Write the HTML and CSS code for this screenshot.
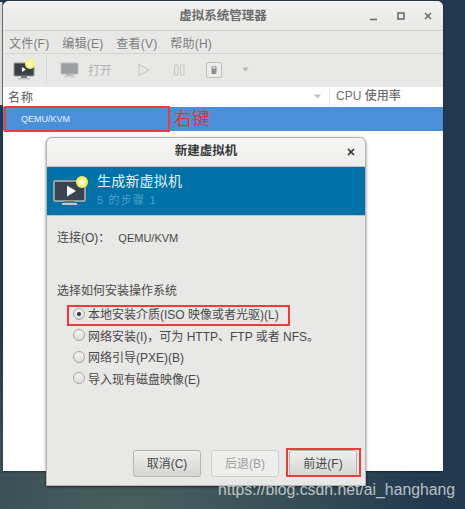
FILE: index.html
```html
<!DOCTYPE html>
<html lang="zh">
<head>
<meta charset="utf-8">
<title>虚拟系统管理器</title>
<link rel="stylesheet" href="styles.css">
</head>
<body>
<div class="backedge"></div>
<div class="window">
  <div class="titlebar">
    <span class="title">虚拟系统管理器</span>
    <div class="wm">
      <svg width="10" height="10" viewBox="0 0 10 10"><path d="M1 8.500h7" stroke="#666" stroke-width="1.400"/></svg>
      <svg width="10" height="10" viewBox="0 0 10 10"><rect x="2" y="2" width="6" height="6" fill="none" stroke="#666" stroke-width="1.500"/></svg>
      <svg width="10" height="10" viewBox="0 0 10 10"><path d="M2 2l6 6M8 2l-6 6" stroke="#666" stroke-width="1.500"/></svg>
    </div>
  </div>
  <div class="menubar">
    <span>文件(F)</span><span>编辑(E)</span><span>查看(V)</span><span>帮助(H)</span>
  </div>
  <div class="toolbar">
    <svg class="tb-new" width="24" height="22" viewBox="0 0 24 22">
      <rect x="1" y="4" width="20" height="13" rx="1" fill="#3a4048" stroke="#999"/>
      <path d="M9 13v-5l4 2.500z" fill="#fff"/>
      <rect x="8" y="17" width="6" height="2" fill="#777"/><rect x="5" y="19" width="12" height="1.500" fill="#bbb"/>
      <circle cx="17" cy="5" r="5" fill="#f6f27a"/>
      <path d="M17 1.500l1 2.400 2.500.2-1.900 1.600.6 2.500-2.200-1.300-2.200 1.300.6-2.500-1.900-1.600 2.500-.2z" fill="#fffde0"/>
    </svg>
    <div class="sep"></div>
    <svg class="tb-mon" width="20" height="18" viewBox="0 0 20 18">
      <rect x="1" y="2" width="17" height="11" rx="1" fill="#9a9ea2" stroke="#bbb"/>
      <rect x="6" y="13" width="7" height="2" fill="#bbb"/><rect x="4" y="15" width="11" height="1.500" fill="#ccc"/>
    </svg>
    <span class="tb-open">打开</span>
    <svg class="tb-play" width="12" height="14" viewBox="0 0 12 14"><path d="M1 1.500v11l10-5.500z" fill="none" stroke="#c8c8c6" stroke-width="1.100"/></svg>
    <svg class="tb-pause" width="11" height="12" viewBox="0 0 11 12"><rect x=".5" y="1" width="3.500" height="10" rx=".5" fill="none" stroke="#c4c4c2"/><rect x="6.500" y="1" width="3.500" height="10" rx=".5" fill="none" stroke="#c4c4c2"/></svg>
    <svg class="tb-stop" width="16" height="16" viewBox="0 0 16 16"><rect x=".5" y=".5" width="15" height="15" rx="2" fill="#ececea" stroke="#bdbdbb"/><rect x="5.500" y="4" width="5" height="8" rx="1" fill="#8e8e8e"/><rect x="6.500" y="4.500" width="3" height="2" fill="#ddd"/></svg>
    <svg class="tb-caret" width="8" height="5" viewBox="0 0 8 5"><path d="M0 .5h7l-3.500 4z" fill="#bdbdbb"/></svg>
  </div>
  <div class="listhead">
    <div class="col-name"><span>名称</span><svg width="8" height="5" viewBox="0 0 8 5"><path d="M0 .5h7l-3.500 4z" fill="#bbb"/></svg></div>
    <div class="col-cpu">CPU 使用率</div>
  </div>
  <div class="row">QEMU/KVM</div>
  <div class="listbody"></div>
</div>

<div class="redbox box-row"></div>
<div class="redtext">右键</div>

<div class="dialog">
  <div class="dlg-title">
    <span>新建虚拟机</span>
    <svg class="dlg-close" width="8" height="8" viewBox="0 0 8 8"><path d="M1 1l6 6M7 1l-6 6" stroke="#333" stroke-width="1.700"/></svg>
  </div>
  <div class="banner">
    <svg width="36" height="32" viewBox="0 0 36 32">
      <rect x="1" y="6" width="31" height="20" rx="1" fill="#3a4350" stroke="#b5b5b0" stroke-width="1.500"/>
      <path d="M14 10.500v11l9-5.500z" fill="#fff"/>
      <rect x="12" y="26" width="9" height="2" fill="#6f7070"/><rect x="9" y="28" width="15" height="2" fill="#c8c8c0"/>
      <circle cx="29" cy="7" r="6" fill="#f2ee55"/>
      <path d="M29 2.500l1.300 3 3.200.3-2.400 2.100.7 3.100-2.800-1.700-2.800 1.700.7-3.100-2.400-2.100 3.200-.3z" fill="#fffde5"/>
    </svg>
    <div class="banner-text">
      <div class="banner-h">生成新虚拟机</div>
      <div class="banner-s">5 的步骤 1</div>
    </div>
  </div>
  <div class="dlg-body">
    <div class="conn"><span>连接(O)：</span><span class="conn-val">QEMU/KVM</span></div>
    <div class="how">选择如何安装操作系统</div>
    <div class="options">
      <label class="opt"><span class="radio on"></span>本地安装介质(ISO 映像或者光驱)(L)</label>
      <label class="opt"><span class="radio"></span>网络安装(I)，可为 HTTP、FTP 或者 NFS。</label>
      <label class="opt"><span class="radio"></span>网络引导(PXE)(B)</label>
      <label class="opt"><span class="radio"></span>导入现有磁盘映像(E)</label>
    </div>
    <div class="buttons">
      <button class="btn">取消(C)</button>
      <button class="btn off">后退(B)</button>
      <button class="btn">前进(F)</button>
    </div>
  </div>
</div>

<div class="redbox box-opt"></div>
<div class="redbox box-btn"></div>
<div class="watermark">https://blog.csdn.net/ai_hanghang</div>
</body>
</html>
```
FILE: styles.css
```css
* { box-sizing: border-box; }
html, body { margin: 0; height: 100%; }
body {
  position: relative;
  width: 465px;
  height: 509px;
  overflow: hidden;
  font-family: "Liberation Sans", "Noto Sans CJK SC", sans-serif;
  background: radial-gradient(ellipse 300px 200px at 130px 509px, #4a5f5e 0%, #344c54 60%, #23394f 100%), #203a55;
  color: #333;
}
.backedge {
  position: absolute;
  left: 0;
  top: 2px;
  width: 3px;
  height: 103px;
  background: #dcdcda;
  border-right: 1px solid #777;
}
.window {
  position: relative;
  width: 440px;
  height: 470px;
  margin: 1px 0 0 3px;
  border-radius: 6px 6px 0 0;
  background: #fff;
  display: flex;
  flex-direction: column;
  overflow: hidden;
  box-shadow: 0 1px 2px rgba(0,0,0,.4);
}
.titlebar {
  height: 30px;
  flex: none;
  display: flex;
  align-items: center;
  justify-content: center;
  position: relative;
  padding-bottom: 2px;
  background: linear-gradient(#f1f1ef, #e8e8e6);
  border-bottom: 1px solid #cfcfcd;
}
.title { font-size: 12.500px; font-weight: bold; color: #6b6b6b; }
.wm {
  position: absolute;
  right: 10px;
  top: 10px;
  display: flex;
  gap: 17px;
}
.menubar {
  height: 23px;
  flex: none;
  display: flex;
  align-items: center;
  gap: 13px;
  padding-left: 6px;
  background: #e8e8e6;
  border-bottom: 1px solid #d5d5d3;
  font-size: 12px;
  letter-spacing: .2px;
  color: #7f7f7f;
}
.toolbar {
  height: 33px;
  flex: none;
  display: flex;
  align-items: center;
  background: #e8e8e6;
  padding: 0 0 2px 10px;
  color: #bdbdbb;
}
.sep { width: 1px; height: 27px; background: #d5d5d3; margin: 0 13px 0 9px; }
.tb-open { font-size: 12px; margin: 0 26px 0 8px; color: #b5b5b3; }
.tb-pause { margin: 0 21px 0 24px; }
.tb-caret { margin-left: 20px; }
.listhead {
  height: 20px;
  flex: none;
  display: flex;
  background: #fff;
  font-size: 12px;
  color: #6e6e6e;
  font-weight: 500;
}
.col-name {
  width: 327px;
  display: flex;
  align-items: center;
  justify-content: space-between;
  padding: 0 7px 2px 5px;
  border-right: 1px solid #e6e6e6;
  letter-spacing: 1px;
}
.col-cpu { padding-left: 6px; line-height: 19px; }
.row {
  height: 24px;
  flex: none;
  background: #4a90d9;
  color: #e6f0fa;
  font-size: 9px;
  line-height: 24px;
  padding-left: 18px;
}
.listbody { flex: 1; background: #fff; }
.redbox { position: absolute; border: 2px solid #ef3b3b; }
.box-row { left: 4px; top: 106px; width: 166px; height: 26px; }
.box-opt { left: 67px; top: 305px; width: 223px; height: 21px; }
.box-btn { left: 286px; top: 448px; width: 75px; height: 29px; }
.redtext {
  position: absolute;
  left: 174px;
  top: 107px;
  font-size: 18px;
  line-height: 24px;
  color: #ef3030;
}
.dialog {
  position: absolute;
  left: 46px;
  top: 137px;
  width: 320px;
  height: 349px;
  border-radius: 6px 6px 0 0;
  background: #e8e8e6;
  border: 1px solid #b5b5b3;
  box-shadow: 0 1px 3px rgba(0,0,0,.5);
  display: flex;
  flex-direction: column;
}
.dlg-title {
  height: 29px;
  flex: none;
  position: relative;
  display: flex;
  align-items: center;
  justify-content: center;
  padding-bottom: 5px;
  background: linear-gradient(#f5f5f4, #eeeeec);
  border-radius: 6px 6px 0 0;
  border-bottom: 1px solid #c5c5c3;
  font-size: 12.500px;
  font-weight: bold;
  color: #3a3a3a;
}
.dlg-close { position: absolute; right: 10px; top: 10px; }
.banner {
  height: 49px;
  flex: none;
  display: flex;
  align-items: center;
  gap: 8px;
  padding-left: 6px;
  background: #0072a8;
  border-bottom: 1px solid #b5c5cf;
}
.banner-text { margin-top: -1px; }
.banner-h { font-size: 14px; line-height: 17px; color: #e8f2f7; letter-spacing: .2px; }
.banner-s { font-size: 11px; line-height: 16px; color: #4f9fca; letter-spacing: 1.200px; margin-top: 2px; }
.dlg-body {
  flex: 1;
  display: flex;
  flex-direction: column;
  padding: 15px 5px 8px 10px;
  font-size: 12px;
  color: #4a4a4a;
}
.conn { display: flex; gap: 8px; line-height: 14px; }
.conn-val { font-size: 11px; }
.how { margin-top: 39px; line-height: 14px; }
.options { margin-top: 5px; padding-left: 16px; display: flex; flex-direction: column; }
.opt { display: flex; align-items: center; gap: 3px; height: 21.500px; white-space: nowrap; }
.radio {
  width: 12px;
  height: 12px;
  border-radius: 50%;
  border: 1px solid #a5a5a3;
  background: linear-gradient(#f4f4f2, #dcdcda);
  flex: none;
  position: relative;
}
.radio.on::after {
  content: "";
  position: absolute;
  left: 3px;
  top: 3px;
  width: 4px;
  height: 4px;
  border-radius: 50%;
  background: #333;
}
.buttons { margin-top: auto; display: flex; justify-content: flex-end; gap: 10px; padding-right: 3px; }
.btn {
  width: 68px;
  height: 27px;
  font: inherit;
  color: #4a4a4a;
  border: 1px solid #b5b5b3;
  border-radius: 3px;
  background: linear-gradient(#efefed, #d5d5d3);
  padding: 0 0 2px;
}
.btn.off { background: #eeeeec; color: #a0a0a0; border-color: #cfcfcd; }
.watermark {
  position: absolute;
  left: 218px;
  top: 480px;
  font-size: 15.800px;
  line-height: 20px;
  color: rgba(225,225,225,.8);
  white-space: nowrap;
}
```
